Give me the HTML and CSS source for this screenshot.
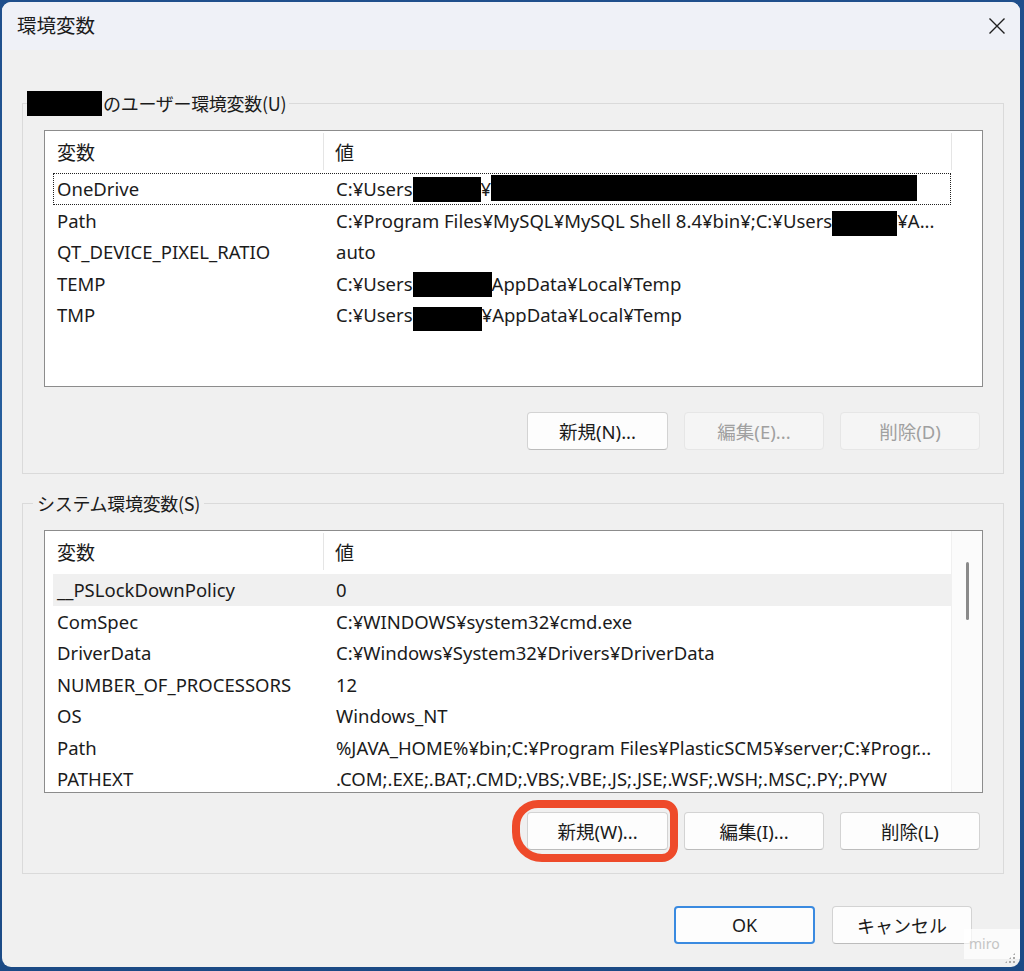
FILE: index.html
```html
<!DOCTYPE html>
<html lang="ja">
<head>
<meta charset="utf-8">
<title>環境変数</title>
<link rel="stylesheet" href="styles.css">
</head>
<body>
<div class="window">
  <div class="titlebar">
    <span class="title">環境変数</span>
    <svg class="close" width="18" height="18" viewBox="0 0 18 18"><path d="M1.5 1.5L16.5 16.5M16.5 1.5L1.5 16.5"/></svg>
  </div>
  <div class="content">
    <fieldset class="group">
      <legend class="legend-user"><span class="redact rl"></span>のユーザー環境変数(U)</legend>
      <div class="listbox lb-user">
        <div class="lb-main">
          <div class="lb-head"><div class="c1">変数</div><div class="c2">値</div></div>
          <div class="row focus"><div class="c1">OneDrive</div><div class="c2">C:¥Users<span class="redact ra"></span>¥<span class="redact rb"></span></div></div>
          <div class="row"><div class="c1">Path</div><div class="c2">C:¥Program Files¥MySQL¥MySQL Shell 8.4¥bin¥;C:¥Users<span class="redact rc"></span>¥A...</div></div>
          <div class="row"><div class="c1">QT_DEVICE_PIXEL_RATIO</div><div class="c2">auto</div></div>
          <div class="row"><div class="c1">TEMP</div><div class="c2">C:¥Users<span class="redact rd"></span>AppData¥Local¥Temp</div></div>
          <div class="row"><div class="c1">TMP</div><div class="c2">C:¥Users<span class="redact re"></span>¥AppData¥Local¥Temp</div></div>
        </div>
        <div class="lb-side"></div>
      </div>
      <div class="btn-row">
        <button class="btn">新規(N)...</button>
        <button class="btn disabled">編集(E)...</button>
        <button class="btn disabled">削除(D)</button>
      </div>
    </fieldset>

    <fieldset class="group group-sys">
      <legend class="legend-sys">システム環境変数(S)</legend>
      <div class="listbox lb-sys">
        <div class="lb-main">
          <div class="lb-head"><div class="c1">変数</div><div class="c2">値</div></div>
          <div class="row hover"><div class="c1">__PSLockDownPolicy</div><div class="c2">0</div></div>
          <div class="row"><div class="c1">ComSpec</div><div class="c2">C:¥WINDOWS¥system32¥cmd.exe</div></div>
          <div class="row"><div class="c1">DriverData</div><div class="c2">C:¥Windows¥System32¥Drivers¥DriverData</div></div>
          <div class="row"><div class="c1">NUMBER_OF_PROCESSORS</div><div class="c2">12</div></div>
          <div class="row"><div class="c1">OS</div><div class="c2">Windows_NT</div></div>
          <div class="row"><div class="c1">Path</div><div class="c2">%JAVA_HOME%¥bin;C:¥Program Files¥PlasticSCM5¥server;C:¥Progr...</div></div>
          <div class="row"><div class="c1">PATHEXT</div><div class="c2">.COM;.EXE;.BAT;.CMD;.VBS;.VBE;.JS;.JSE;.WSF;.WSH;.MSC;.PY;.PYW</div></div>
        </div>
        <div class="lb-side scroll"><div class="thumb"></div></div>
      </div>
      <div class="btn-row">
        <div class="btn-wrap">
          <button class="btn">新規(W)...</button>
          <div class="annot"></div>
        </div>
        <button class="btn">編集(I)...</button>
        <button class="btn">削除(L)</button>
      </div>
    </fieldset>

    <div class="footer">
      <button class="btn default">OK</button>
      <button class="btn">キャンセル</button>
    </div>
  </div>
  <div class="miro">miro</div>
  <div class="grip"></div>
</div>
</body>
</html>
```

FILE: styles.css
```css
html, body {
  margin: 0;
  padding: 0;
}
body {
  width: 1024px;
  height: 971px;
  overflow: hidden;
  background: linear-gradient(180deg, #1f4f8c 0%, #27609f 50%, #1b4a85 100%);
  font-family: "Noto Sans", "Noto Sans CJK JP", sans-serif;
  color: #1b1b1b;
}
.window {
  position: relative;
  margin: 2px 0 0 2px;
  width: 1018px;
  height: 965px;
  border-radius: 9px;
  background: #f0f0f0;
  overflow: hidden;
  display: flex;
  flex-direction: column;
}
.titlebar {
  height: 48px;
  flex: none;
  background: #eff1f7;
  display: flex;
  align-items: center;
  justify-content: space-between;
  padding: 0 14px 3px 15px;
  box-sizing: border-box;
}
.title {
  font-size: 19.5px;
  font-family: "Noto Sans CJK JP", sans-serif;
  color: #1b1b1b;
}
.close {
  display: block;
  margin-top: 3px;
}
.close path {
  stroke: #1f1f1f;
  stroke-width: 1.4;
  fill: none;
}
.content {
  padding: 40px 16px 0 20px;
  display: flex;
  flex-direction: column;
}
.group {
  margin: 0;
  padding: 14px 20px 23px 21px;
  border: 1px solid #dadada;
  min-width: 0;
}
.group-sys {
  margin-top: 16px;
}
legend {
  font-family: "Noto Sans CJK JP", sans-serif;
  font-size: 18px;
  line-height: 26px;
  height: 26px;
  display: flex;
  align-items: center;
  letter-spacing: -0.3px;
}
.legend-user {
  margin-left: -17px;
  padding: 0 3px 0 0;
}
.legend-sys {
  margin-left: -11px;
  padding: 0 4px;
}
.redact {
  display: inline-block;
  background: #000;
  vertical-align: middle;
}
.rl { width: 75px; height: 25px; margin-right: 1px; }
.ra { width: 68px; height: 25px; margin-top: -4px; }
.rb { width: 426px; height: 26px; margin-top: -6px; }
.rc { width: 65px; height: 26px; margin-top: 2px; }
.rd { width: 79px; height: 25px; margin-top: -3px; }
.re { width: 69px; height: 24px; margin-top: 4px; }

.listbox {
  border: 1px solid #8c8c8c;
  background: #fff;
  display: flex;
  overflow: hidden;
}
.lb-user { height: 255px; }
.lb-sys { height: 261px; }
.lb-main {
  flex: none;
  width: 898px;
  padding-left: 8px;
}
.lb-side {
  flex: none;
  width: 31px;
}
.lb-side.scroll {
  background: #fbfbfb;
  border-left: 1px solid #f0f0f0;
  width: 30px;
  padding-top: 31px;
  display: flex;
  justify-content: center;
}
.thumb {
  width: 3px;
  height: 58px;
  border-radius: 2px;
  background: #8a8a8a;
  margin-left: 1px;
}
.lb-head {
  display: grid;
  grid-template-columns: 271px 1fr;
  height: 42px;
  margin-left: -8px;
  padding-left: 8px;
}
.lb-sys .lb-head { height: 43px; }
.lb-head > div {
  font-family: "Noto Sans CJK JP", sans-serif;
  font-size: 19px;
  margin-top: 2px;
  height: 37px;
  display: flex;
  align-items: center;
  border-right: 1px solid #e5e5e5;
}
.lb-head .c1 { padding-left: 4px; }
.lb-head .c2 { padding-left: 11px; margin-right: -1px; }
.row {
  display: grid;
  grid-template-columns: 271px 1fr;
  height: 31.5px;
  line-height: 31.5px;
  font-size: 18.5px;
  white-space: nowrap;
}
.row .c1 { padding-left: 4px; overflow: hidden; }
.row .c2 { padding-left: 12px; overflow: hidden; }
.row.focus {
  outline: 1px dotted #222;
  outline-offset: -1px;
}
.row.hover {
  background: #f0f0f0;
}

.btn-row {
  display: flex;
  justify-content: flex-end;
  gap: 16px;
  padding-right: 3px;
}
.group .btn-row { margin-top: 25px; }
.group-sys .btn-row { margin-top: 19px; }
.btn {
  width: 140px;
  height: 38px;
  font-family: "Noto Sans", "Noto Sans CJK JP", sans-serif;
  font-size: 18.5px;
  color: #1b1b1b;
  background: #fdfdfd;
  border: 1px solid #d3d3d3;
  border-bottom-color: #bcbcbc;
  border-radius: 4px;
  padding: 0;
  margin: 0;
}
.btn-row > .btn:first-child,
.btn-wrap .btn { width: 141px; }
.btn.disabled {
  background: #f5f5f5;
  border-color: #e6e6e6;
  color: #a0a0a0;
}
.btn-wrap {
  position: relative;
  display: flex;
}
.annot {
  position: absolute;
  left: -15px;
  right: -10px;
  top: -12px;
  bottom: -12px;
  border: 8px solid #ee4a2a;
  border-radius: 26px 14px 16px 30px;
  pointer-events: none;
}
.footer {
  display: flex;
  justify-content: flex-end;
  gap: 17px;
  margin-top: 32px;
  padding-right: 32px;
}
.footer .btn {
  font-size: 18px;
}
.footer .btn.default {
  width: 141px;
  border: 2px solid #3a8ae0;
}
.miro {
  position: absolute;
  right: -4px;
  bottom: 8px;
  width: 60px;
  height: 30px;
  background: rgba(255, 255, 255, 0.7);
  color: #c4c4c4;
  font-family: "Noto Sans", sans-serif;
  font-size: 14px;
  line-height: 30px;
  padding-left: 5px;
  box-sizing: border-box;
}
.grip {
  position: absolute;
  right: 4px;
  bottom: 3px;
  width: 12px;
  height: 12px;
  background-image: radial-gradient(circle, #a8a8a8 1px, transparent 1.3px);
  background-size: 4px 4px;
  clip-path: polygon(100% 0, 100% 100%, 0 100%);
}
```
